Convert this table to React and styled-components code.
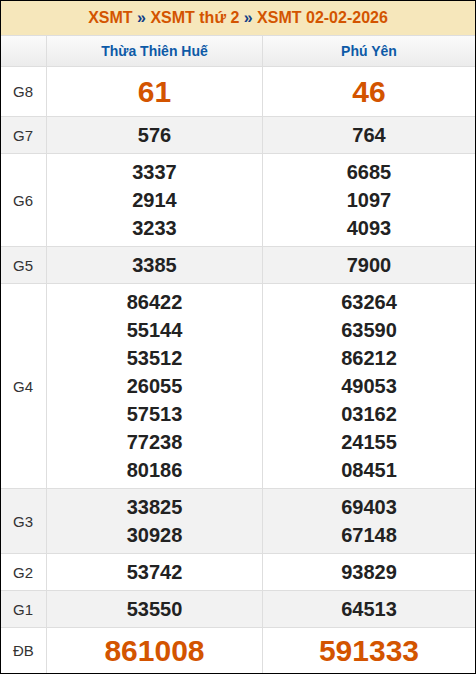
import React from 'react';
import styled, { createGlobalStyle } from 'styled-components';

const GlobalStyle = createGlobalStyle`
  html, body {
    margin: 0;
    padding: 0;
    background: #fff;
  }

  body {
    font-family: 'Liberation Sans', Arial, sans-serif;
  }
`;

const Board = styled.div`
  box-sizing: border-box;
  width: 476px;
  border: 1px solid #000;
  background: #fff;
`;

const Title = styled.h2`
  margin: 0;
  height: 34px;
  display: flex;
  align-items: center;
  justify-content: center;
  background: #f6e7bb;
  font-size: 16px;
  font-weight: bold;
  color: #d35400;
  white-space: pre;

  span {
    color: #123e86;
  }
`;

const Grid = styled.div`
  display: grid;
  grid-template-columns: 45px 215px 1fr;
  gap: 1px;
  background: #dedede;
  border-top: 1px solid #dedede;
`;

const HeadCell = styled.div`
  height: 30px;
  display: flex;
  align-items: center;
  justify-content: center;
  background: linear-gradient(#fbfbfb, #ececec);
  font-size: 14px;
  font-weight: bold;
  color: #0d5aa7;
`;

const Label = styled.div`
  display: flex;
  align-items: center;
  padding-left: 12px;
  background: ${p => (p.$alt ? '#f2f2f2' : '#fff')};
  font-size: 15px;
  color: #333;
`;

const Numbers = styled.div`
  display: flex;
  flex-direction: column;
  align-items: center;
  justify-content: center;
  padding: 4px 0;
  background: ${p => (p.$alt ? '#f2f2f2' : '#fff')};

  > span {
    display: block;
    font-size: ${p => (p.$big ? '30px' : '20px')};
    line-height: ${p => p.$lh}px;
    font-weight: bold;
    color: ${p => (p.$big ? '#d35400' : '#222')};
  }
`;

const prizes = [
  { name: 'G8', big: true, lh: 41, a: ['61'], b: ['46'] },
  { name: 'G7', alt: true, a: ['576'], b: ['764'] },
  { name: 'G6', a: ['3337', '2914', '3233'], b: ['6685', '1097', '4093'] },
  { name: 'G5', alt: true, a: ['3385'], b: ['7900'] },
  {
    name: 'G4',
    a: ['86422', '55144', '53512', '26055', '57513', '77238', '80186'],
    b: ['63264', '63590', '86212', '49053', '03162', '24155', '08451'],
  },
  { name: 'G3', alt: true, a: ['33825', '30928'], b: ['69403', '67148'] },
  { name: 'G2', a: ['53742'], b: ['93829'] },
  { name: 'G1', alt: true, a: ['53550'], b: ['64513'] },
  { name: 'ĐB', big: true, lh: 37, a: ['861008'], b: ['591333'] },
];

function App() {
  return (
    <>
      <GlobalStyle />
      <Board>
        <Title>
          XSMT <span>»</span> XSMT thứ 2 <span>»</span> XSMT 02-02-2026
        </Title>
        <Grid>
          <HeadCell />
          <HeadCell>Thừa Thiên Huế</HeadCell>
          <HeadCell>Phú Yên</HeadCell>
          {prizes.map(row => (
            <React.Fragment key={row.name}>
              <Label $alt={row.alt}>{row.name}</Label>
              {[row.a, row.b].map((list, i) => (
                <Numbers key={i} $alt={row.alt} $big={row.big} $lh={row.lh || 28}>
                  {list.map((n, j) => <span key={j}>{n}</span>)}
                </Numbers>
              ))}
            </React.Fragment>
          ))}
        </Grid>
      </Board>
    </>
  );
}

export default App;
